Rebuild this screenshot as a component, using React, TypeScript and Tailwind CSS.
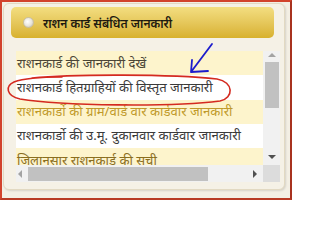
import React from "react";

const rows = [
  { t: "राशनकार्ड की जानकारी देखें", bg: "bg-[#fdf4cc]", c: "text-[#4a4536]" },
  { t: "राशनकार्ड हितग्राहियों की विस्तृत जानकारी", bg: "bg-white", c: "text-[#3a3a3a]" },
  { t: "राशनकार्डो की ग्राम/वार्ड वार कार्डवार जानकारी", bg: "bg-[#fdf4cc]", c: "text-[#c09a2a]" },
  { t: "राशनकार्डो की उ.मू. दुकानवार कार्डवार जानकारी", bg: "bg-white", c: "text-[#3a3a3a]" },
  { t: "जिलानसार राशनकार्ड की सची", bg: "bg-[#fdf4cc]", c: "text-[#8a6e1e]" },
];

export default function App() {
  return (
    <div
      className="relative w-[292px] h-[200px] overflow-hidden border-2 border-[#d2432c] border-r-[#a8321f] border-b-[#b83a24] bg-[#f3efe4] p-px"
      style={{ fontFamily: '"Noto Sans", "Lohit Devanagari", sans-serif' }}
    >
      <div className="flex flex-col w-[282px] h-[187px] rounded-md border border-[#e2d9c2] bg-[#f5f1e6] shadow-[1px_1px_2px_rgba(0,0,0,0.12)] pt-[3px] pl-[7px]">
        <div className="flex items-center w-[263px] h-[31px] rounded-[5px] bg-gradient-to-b from-[#f3de80] to-[#d8b12c] pl-[12px] gap-[9px]">
          <div className="w-[11px] h-[11px] rounded-full bg-[radial-gradient(circle_at_40%_40%,#ffffff,#e8e4da_55%,#b9b3a3)] border border-[#c8bfa5]" />
          <span className="text-[12px] font-semibold text-[#1e1a10] leading-none pt-[2px]">
            राशन कार्ड संबंधित जानकारी
          </span>
        </div>
        <div className="mt-[13px] ml-[5px] w-[264px] h-[131px] grid grid-cols-[247px_17px] grid-rows-[114px_17px]">
          <div className="overflow-hidden bg-white flex flex-col">
            {rows.map((r, i) => (
              <div
                key={i}
                className={`h-[24.3px] shrink-0 flex items-center pl-[1px] whitespace-nowrap text-[13.1px] leading-none ${r.bg} ${r.c}`}
              >
                {r.t}
              </div>
            ))}
          </div>
          <div className="flex flex-col items-center bg-[#f1f1f1] pt-[2px] pb-[6px]">
            <div className="w-0 h-0 border-l-[4px] border-r-[4px] border-b-[4px] border-l-transparent border-r-transparent border-b-[#a3a3a3]" />
            <div className="mt-[5px] w-[14px] h-[46px] bg-[#c1c1c1]" />
            <div className="flex-1" />
            <div className="w-0 h-0 border-l-[4px] border-r-[4px] border-t-[4px] border-l-transparent border-r-transparent border-t-[#505050]" />
          </div>
          <div className="flex items-center bg-[#f1f1f1] pl-[2px] pr-[6px]">
            <div className="w-0 h-0 border-t-[4px] border-b-[4px] border-r-[4px] border-t-transparent border-b-transparent border-r-[#a3a3a3]" />
            <div className="ml-[6px] w-[180px] h-[14px] bg-[#c1c1c1]" />
            <div className="flex-1" />
            <div className="w-0 h-0 border-t-[4px] border-b-[4px] border-l-[4px] border-t-transparent border-b-transparent border-l-[#505050]" />
          </div>
          <div className="bg-[#dcdcdc]" />
        </div>
      </div>
      <svg className="absolute left-0 top-0 pointer-events-none" width="292" height="200" viewBox="0 0 292 200">
        <path
          d="M30 76 C70 72 170 72 215 77 C232 80 232 96 218 99 C170 105 60 104 18 97 C4 94 3 84 12 80 C20 77 40 75 60 75"
          fill="none"
          stroke="#d42a20"
          strokeWidth="1.6"
          strokeLinecap="round"
        />
        <path
          d="M210 42 L189 70 M190 58 L189 70 L206 69"
          fill="none"
          stroke="#1c1ccc"
          strokeWidth="1.8"
          strokeLinecap="round"
          strokeLinejoin="round"
        />
      </svg>
    </div>
  );
}
